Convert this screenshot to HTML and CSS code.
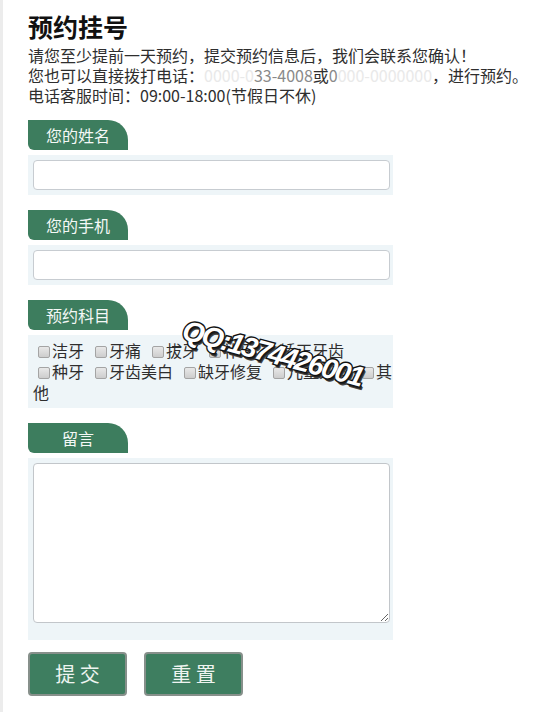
FILE: index.html
```html
<!DOCTYPE html>
<html lang="zh-CN">
<head>
<meta charset="utf-8">
<title>预约挂号</title>
<link rel="stylesheet" href="styles.css">
</head>
<body>
<div class="page">
  <h1 class="title">预约挂号</h1>
  <p class="intro">请您至少提前一天预约，提交预约信息后，我们会联系您确认！<br>您也可以直接拨打电话：<span class="blur">0000-0</span><span class="half">33-4008</span>或<span class="half">0</span><span class="blur">000-0000000</span>，进行预约。<br>电话客服时间：09:00-18:00(节假日不休)</p>

  <form class="form">
    <div class="field">
      <div class="field-label">您的姓名</div>
      <div class="field-box"><input type="text" class="text-input"></div>
    </div>
    <div class="field">
      <div class="field-label">您的手机</div>
      <div class="field-box"><input type="text" class="text-input"></div>
    </div>
    <div class="field">
      <div class="field-label">预约科目</div>
      <div class="field-box checks"><span class="opt"><input type="checkbox" class="cb">洁牙</span> <span class="opt"><input type="checkbox" class="cb">牙痛</span> <span class="opt"><input type="checkbox" class="cb">拔牙</span> <span class="opt"><input type="checkbox" class="cb">补牙</span> <span class="opt"><input type="checkbox" class="cb">矫正牙齿</span> <span class="opt"><input type="checkbox" class="cb">种牙</span> <span class="opt"><input type="checkbox" class="cb">牙齿美白</span> <span class="opt"><input type="checkbox" class="cb">缺牙修复</span> <span class="opt"><input type="checkbox" class="cb">儿童牙科</span> <span class="opt last"><input type="checkbox" class="cb">其他</span></div>
    </div>
    <div class="field">
      <div class="field-label">留言</div>
      <div class="field-box area-box"><textarea class="message"></textarea></div>
    </div>
    <div class="actions">
      <button type="submit" class="btn">提 交</button>
      <button type="reset" class="btn">重 置</button>
    </div>
  </form>

  <div class="watermark">QQ:1374426001</div>
</div>
</body>
</html>
```

FILE: styles.css
```css
html, body {
  margin: 0;
  padding: 0;
  background: #fff;
}

.page {
  position: relative;
  box-sizing: border-box;
  min-height: 712px;
  border-left: 3px solid #ececec;
  padding: 11px 0 0 25px;
  font-family: "Noto Sans CJK SC", "Noto Sans", sans-serif;
  color: #2b2b2b;
}

.title {
  margin: 0 0 4px;
  font-size: 25px;
  line-height: 30px;
  font-weight: 700;
  color: #111;
}

.intro {
  margin: 0;
  font-size: 16px;
  line-height: 20px;
  color: #2e2e2e;
}

.blur { color: #e9e9e9; }
.half { color: #8a8a8a; }

.form {
  margin-top: 15px;
}

.field + .field {
  margin-top: 15px;
}

.field-label {
  width: 100px;
  height: 30px;
  line-height: 30px;
  text-align: center;
  font-size: 16px;
  color: #f4f8f6;
  background: #3d7d5e;
  border-radius: 0 20px 0 6px;
}

.field-box {
  box-sizing: border-box;
  width: 365px;
  margin-top: 5px;
  padding: 5px 3px 5px 5px;
  background: #eef5f8;
}

.text-input {
  display: block;
  box-sizing: border-box;
  width: 357px;
  height: 30px;
  margin: 0;
  border: 1px solid #c7ccd1;
  border-radius: 4px;
  background: #fff;
}

.checks {
  padding: 5px 1px 5px 5px;
  font-size: 16px;
  line-height: 21px;
  color: #2e2e2e;
  word-spacing: 2.4px;
}

.opt {
  white-space: nowrap;
  word-spacing: 0;
}

.opt.last {
  white-space: normal;
}

.cb {
  -webkit-appearance: none;
  appearance: none;
  box-sizing: border-box;
  width: 12px;
  height: 12px;
  margin: 0 2px 0 5px;
  vertical-align: -1px;
  border: 1px solid #a4a4a4;
  border-radius: 2px;
  background: linear-gradient(#e8e8e8, #cdcdcd);
}

.area-box {
  padding: 5px 3px 17px 5px;
}

.message {
  display: block;
  box-sizing: border-box;
  width: 357px;
  height: 160px;
  margin: 0;
  border: 1px solid #c2c6ca;
  border-radius: 4px;
  background: #fff;
}

.actions {
  display: flex;
  gap: 17px;
  margin-top: 12px;
}

.btn {
  box-sizing: border-box;
  width: 99px;
  height: 44px;
  padding: 0;
  border: 2px solid #87908b;
  border-radius: 4px;
  background: #3e7e60;
  color: #eef4f0;
  font-family: "Noto Sans CJK SC", "Noto Sans", sans-serif;
  font-size: 20px;
  line-height: 40px;
}

.watermark {
  position: absolute;
  left: 180px;
  top: 314px;
  transform: rotate(15deg);
  transform-origin: 0 50%;
  font-family: "Liberation Sans", Arial, sans-serif;
  font-size: 28px;
  line-height: 32px;
  font-weight: 700;
  font-style: italic;
  letter-spacing: -1.8px;
  white-space: nowrap;
  color: #fff;
  -webkit-text-stroke: 2.8px #111;
  paint-order: stroke fill;
  text-shadow: 1px 1px 0 #111, 2px 2px 0 #222, 3px 3px 0 #444;
}
```
